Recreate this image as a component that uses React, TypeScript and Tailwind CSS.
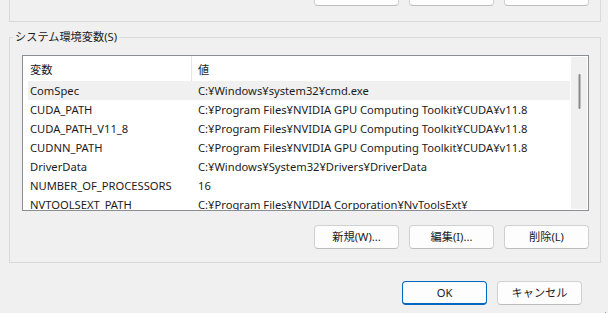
import React from 'react';

const ROWS: [string, string][] = [
  ['ComSpec', 'C:¥Windows¥system32¥cmd.exe'],
  ['CUDA_PATH', 'C:¥Program Files¥NVIDIA GPU Computing Toolkit¥CUDA¥v11.8'],
  ['CUDA_PATH_V11_8', 'C:¥Program Files¥NVIDIA GPU Computing Toolkit¥CUDA¥v11.8'],
  ['CUDNN_PATH', 'C:¥Program Files¥NVIDIA GPU Computing Toolkit¥CUDA¥v11.8'],
  ['DriverData', 'C:¥Windows¥System32¥Drivers¥DriverData'],
  ['NUMBER_OF_PROCESSORS', '16'],
  ['NVTOOLSEXT_PATH', 'C:¥Program Files¥NVIDIA Corporation¥NvToolsExt¥'],
];

function Btn({ children, primary }: { children?: React.ReactNode; primary?: boolean }) {
  return (
    <button
      className={
        primary
          ? 'w-[85px] h-[24px] rounded-[4px] bg-[#fdfdfd] border border-[#0067c0] border-b-2 flex items-center justify-center text-[#1b1b1b]'
          : 'w-[85px] h-[24px] rounded-[4px] bg-[#fdfdfd] border border-[#d0d0d0] border-b-[#bdbdbd] flex items-center justify-center text-[#1b1b1b]'
      }
    >
      {children}
    </button>
  );
}

export default function App() {
  return (
    <div
      className="relative w-[608px] h-[313px] overflow-hidden bg-[#f0f0f0] text-[11.2px] leading-[16px] text-[#1b1b1b]"
      style={{ fontFamily: '"Noto Sans", "Noto Sans CJK JP", sans-serif' }}
    >
      {/* user variables group, only its bottom edge is visible */}
      <div className="ml-[9px] mr-[7px] h-[22px] flex flex-col border-x border-b border-[#d9d9d9]">
        <div className="-mt-[18px] flex justify-end gap-[10px] pr-[11px]">
          <Btn>新規(N)...</Btn>
          <Btn>編集(E)...</Btn>
          <Btn>削除(D)</Btn>
        </div>
      </div>

      <fieldset className="mt-[7px] ml-[9px] mr-[7px] border border-[#d9d9d9] pl-[12px] pr-[11px] pb-[13px]">
        <legend className="-ml-[9px] px-[2px] text-[#1b1b1b]">システム環境変数(S)</legend>

        <div className="mt-[10px] h-[156px] border border-[#8a8d91] bg-white flex">
          <div className="flex-1 flex flex-col overflow-hidden">
            <div className="h-[25px] pt-[3px] flex items-center shrink-0">
              <div className="w-[168px] pl-[7px]">変数</div>
              <div className="w-px self-stretch -mt-[3px] bg-[#e5e5e5]" />
              <div className="pl-[6px]">値</div>
            </div>
            {ROWS.map(([name, value], i) => (
              <div
                key={name}
                className={
                  i === 0
                    ? 'ml-[5px] mr-[1px] h-[19px] shrink-0 flex items-center whitespace-nowrap bg-[#f0f0f0]'
                    : 'ml-[5px] mr-[1px] h-[19px] shrink-0 flex items-center whitespace-nowrap'
                }
              >
                <div className="w-[164px] pl-[2px]">{name}</div>
                <div className="pl-[6px]">{value}</div>
              </div>
            ))}
          </div>
          <div className="w-[16px] my-[1px] mr-[1px] bg-[#f0f0f0] flex justify-center">
            <div className="mt-[17px] w-[2px] h-[35px] rounded-full bg-[#8a8a8a] translate-x-[0.5px]" />
          </div>
        </div>

        <div className="mt-[14px] flex justify-end gap-[10px]">
          <Btn>新規(W)...</Btn>
          <Btn>編集(I)...</Btn>
          <Btn>削除(L)</Btn>
        </div>
      </fieldset>

      <div className="mt-[18px] flex justify-end gap-[10px] pr-[26px]">
        <Btn primary>OK</Btn>
        <Btn>キャンセル</Btn>
      </div>

      {/* size grip */}
      <div className="absolute right-[2px] bottom-0 w-px h-px bg-[#a0a0a0]" />
    </div>
  );
}
